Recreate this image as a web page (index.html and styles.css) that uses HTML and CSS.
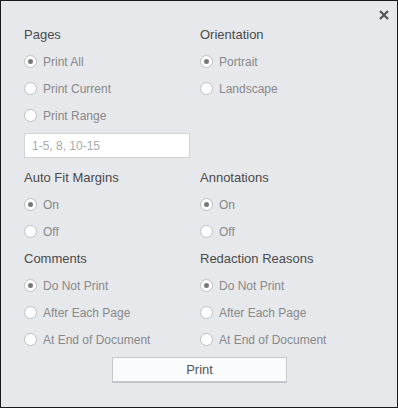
FILE: index.html
```html
<!DOCTYPE html>
<html lang="en">
  <head>
    <title>Print</title>
    <meta charset="UTF-8" />
    <link rel="stylesheet" href="styles.css">
  </head>
  <body>
    <div class="print-dialog">
      <button class="close-btn" type="button" aria-label="Close">
        <svg width="10" height="10" viewBox="0 0 10 10">
          <path d="M1 1L9 9M9 1L1 9" stroke="#555" stroke-width="2.2" />
        </svg>
      </button>
      <form class="settings">
        <div class="group">
          <div class="group-title">Pages</div>
          <label class="option"><input type="radio" name="pages" checked />Print All</label>
          <label class="option"><input type="radio" name="pages" />Print Current</label>
          <label class="option"><input type="radio" name="pages" />Print Range</label>
          <input class="range-input" type="text" placeholder="1-5, 8, 10-15" />
        </div>
        <div class="group">
          <div class="group-title">Orientation</div>
          <label class="option"><input type="radio" name="orientation" checked />Portrait</label>
          <label class="option"><input type="radio" name="orientation" />Landscape</label>
        </div>
        <div class="group">
          <div class="group-title">Auto Fit Margins</div>
          <label class="option"><input type="radio" name="margins" checked />On</label>
          <label class="option"><input type="radio" name="margins" />Off</label>
        </div>
        <div class="group">
          <div class="group-title">Annotations</div>
          <label class="option"><input type="radio" name="annotations" checked />On</label>
          <label class="option"><input type="radio" name="annotations" />Off</label>
        </div>
        <div class="group">
          <div class="group-title">Comments</div>
          <label class="option"><input type="radio" name="comments" checked />Do Not Print</label>
          <label class="option"><input type="radio" name="comments" />After Each Page</label>
          <label class="option"><input type="radio" name="comments" />At End of Document</label>
        </div>
        <div class="group">
          <div class="group-title">Redaction Reasons</div>
          <label class="option"><input type="radio" name="redaction" checked />Do Not Print</label>
          <label class="option"><input type="radio" name="redaction" />After Each Page</label>
          <label class="option"><input type="radio" name="redaction" />At End of Document</label>
        </div>
      </form>
      <div class="actions">
        <button class="print-btn" type="button">Print</button>
      </div>
    </div>
  </body>
</html>
```

FILE: styles.css
```css
body {
  margin: 0;
  font-family: "Liberation Sans", Arial, sans-serif;
}

.print-dialog {
  position: relative;
  box-sizing: border-box;
  width: 398px;
  height: 408px;
  border: 1px solid #1a1a1a;
  background-color: #e7e8ec;
  padding: 20px 0 0 23px;
}

.close-btn {
  position: absolute;
  top: 8px;
  right: 7px;
  width: 12px;
  height: 12px;
  padding: 1px;
  border: none;
  background: none;
  cursor: pointer;
}

.close-btn svg {
  display: block;
}

.settings {
  display: grid;
  grid-template-columns: 176px 176px;
}

.group-title {
  height: 27px;
  line-height: 27px;
  font-size: 13px;
  color: #4a4a4a;
}

.option {
  display: flex;
  align-items: center;
  height: 27px;
  font-size: 12px;
  color: #888;
  cursor: pointer;
}

.option input {
  appearance: none;
  -webkit-appearance: none;
  box-sizing: border-box;
  width: 13px;
  height: 13px;
  margin: 0 6px 0 0;
  border: 1px solid #bdbec4;
  border-radius: 50%;
  background-color: #fff;
  display: flex;
  align-items: center;
  justify-content: center;
}

.option input:checked::after {
  content: "";
  width: 5px;
  height: 5px;
  border-radius: 50%;
  background-color: #777;
}

.range-input {
  box-sizing: border-box;
  width: 166px;
  height: 25px;
  margin: 4px 0 6px 0;
  padding: 0 7px;
  border: 1px solid #d2d3d8;
  background-color: #fff;
  font-family: inherit;
  font-size: 12px;
  color: #555;
}

.range-input::placeholder {
  color: #aaa;
}

.actions {
  display: flex;
  justify-content: center;
  padding: 4px 23px 0 0;
}

.print-btn {
  box-sizing: border-box;
  width: 175px;
  height: 25px;
  margin-left: 1px;
  border: 1px solid #c8c9cf;
  background-color: #fafbfd;
  box-shadow: 0 1px 0 #c3c4ca;
  font-family: inherit;
  font-size: 13px;
  color: #555;
  cursor: pointer;
}
```
